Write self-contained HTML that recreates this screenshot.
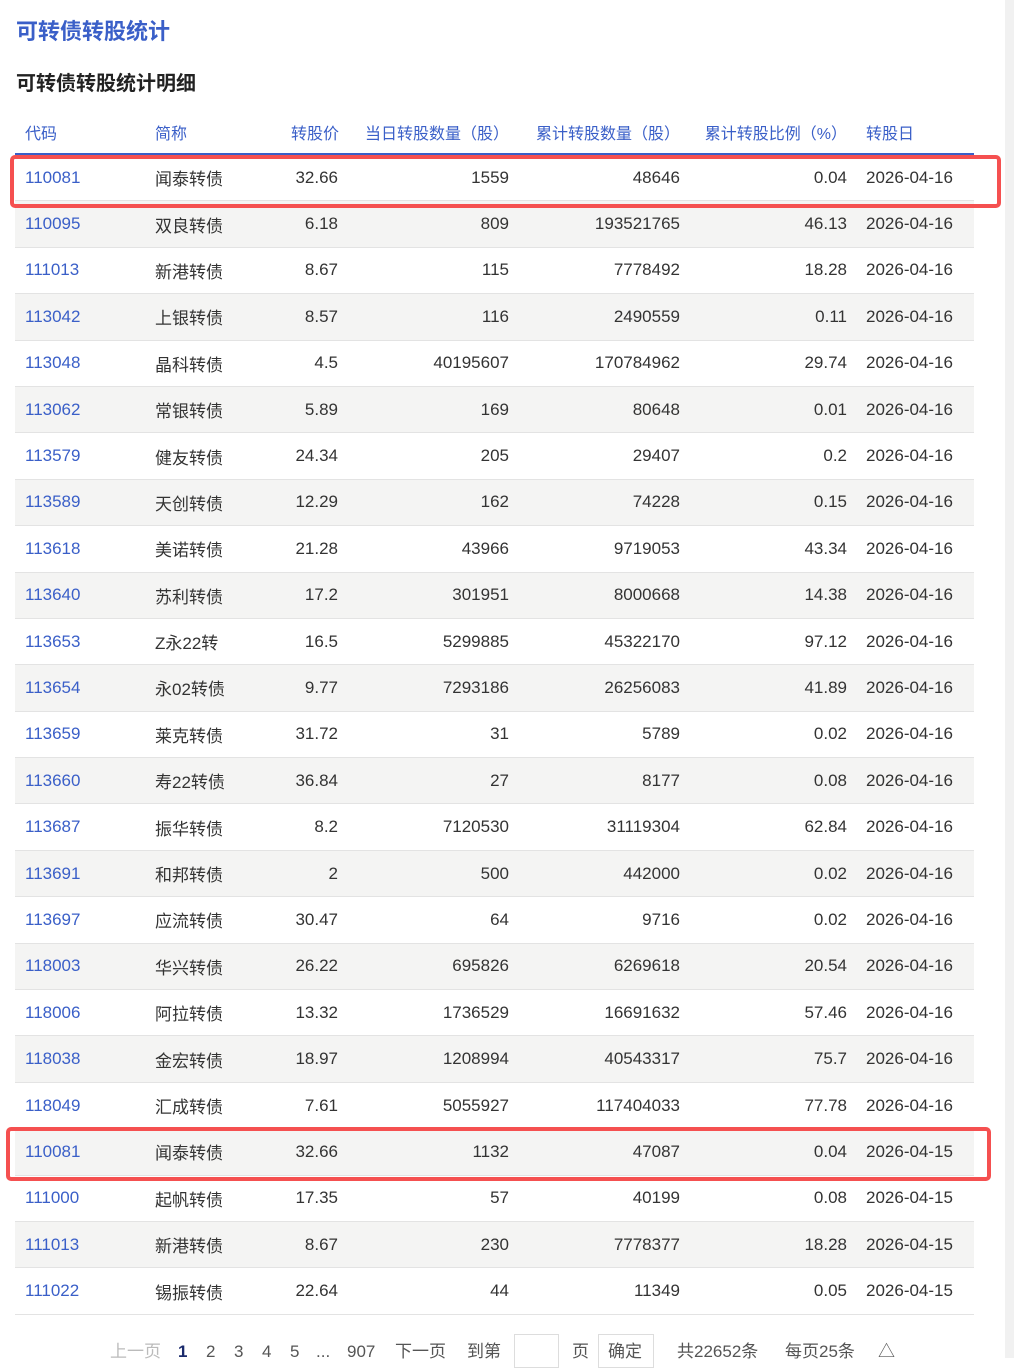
<!DOCTYPE html>
<html><head><meta charset="utf-8"><style>
body{margin:0;background:#fff;font-family:"Liberation Sans","Noto Sans CJK SC",sans-serif;width:1014px;height:1358px;overflow:hidden;position:relative}
.sb{position:absolute;right:0;top:0;width:9px;height:1358px;background:#f1f1f1}
h1{position:absolute;left:16px;top:14px;margin:0;font-size:22px;color:#3a5fc8;font-weight:bold}
h2{position:absolute;left:16px;top:67px;margin:0;font-size:20px;color:#222;font-weight:bold}
table{position:absolute;left:15px;top:110px;border-collapse:collapse;table-layout:fixed;width:959px;font-size:17px;color:#333}
th{font-weight:normal;color:#3a5fc8;font-size:16px;height:41px;border-bottom:2px solid #3a5fc8;white-space:nowrap}
td{height:45.4px;border-bottom:1px solid #e3e3e3;white-space:nowrap;padding:0}
tbody tr:nth-child(odd) td{background:#fff}
tbody tr:nth-child(even) td{background:#f4f4f3}
.c{padding-left:10px;text-align:left;color:#3a5fc8}
.n{padding-left:10px;text-align:left}
.r{text-align:right;padding-right:10px}
.d{padding-left:9px;text-align:left}
th.c,th.n{padding-left:10px;text-align:left}
th.r{text-align:right;padding-right:10px}
th.d{text-align:left;padding-left:9px}
.box{position:absolute;border:4px solid #f55050;border-radius:5px;box-sizing:border-box}
.p{position:absolute;top:1341px;font-size:17px;line-height:22px;color:#555;white-space:nowrap}
.in{position:absolute;top:1334px;border:1px solid #ddd;box-sizing:border-box;height:34px}
</style></head><body>
<div class="sb"></div>
<h1>可转债转股统计</h1>
<h2>可转债转股统计明细</h2>
<table>
<colgroup><col style="width:130px"><col style="width:145px"><col style="width:58px"><col style="width:171px"><col style="width:171px"><col style="width:167px"><col style="width:117px"></colgroup>
<thead><tr><th class="c">代码</th><th class="n">简称</th><th class="r">转股价</th><th class="r">当日转股数量（股）</th><th class="r">累计转股数量（股）</th><th class="r">累计转股比例（%）</th><th class="d">转股日</th></tr></thead>
<tbody>
<tr><td class="c">110081</td><td class="n">闻泰转债</td><td class="r">32.66</td><td class="r">1559</td><td class="r">48646</td><td class="r">0.04</td><td class="d">2026-04-16</td></tr>
<tr><td class="c">110095</td><td class="n">双良转债</td><td class="r">6.18</td><td class="r">809</td><td class="r">193521765</td><td class="r">46.13</td><td class="d">2026-04-16</td></tr>
<tr><td class="c">111013</td><td class="n">新港转债</td><td class="r">8.67</td><td class="r">115</td><td class="r">7778492</td><td class="r">18.28</td><td class="d">2026-04-16</td></tr>
<tr><td class="c">113042</td><td class="n">上银转债</td><td class="r">8.57</td><td class="r">116</td><td class="r">2490559</td><td class="r">0.11</td><td class="d">2026-04-16</td></tr>
<tr><td class="c">113048</td><td class="n">晶科转债</td><td class="r">4.5</td><td class="r">40195607</td><td class="r">170784962</td><td class="r">29.74</td><td class="d">2026-04-16</td></tr>
<tr><td class="c">113062</td><td class="n">常银转债</td><td class="r">5.89</td><td class="r">169</td><td class="r">80648</td><td class="r">0.01</td><td class="d">2026-04-16</td></tr>
<tr><td class="c">113579</td><td class="n">健友转债</td><td class="r">24.34</td><td class="r">205</td><td class="r">29407</td><td class="r">0.2</td><td class="d">2026-04-16</td></tr>
<tr><td class="c">113589</td><td class="n">天创转债</td><td class="r">12.29</td><td class="r">162</td><td class="r">74228</td><td class="r">0.15</td><td class="d">2026-04-16</td></tr>
<tr><td class="c">113618</td><td class="n">美诺转债</td><td class="r">21.28</td><td class="r">43966</td><td class="r">9719053</td><td class="r">43.34</td><td class="d">2026-04-16</td></tr>
<tr><td class="c">113640</td><td class="n">苏利转债</td><td class="r">17.2</td><td class="r">301951</td><td class="r">8000668</td><td class="r">14.38</td><td class="d">2026-04-16</td></tr>
<tr><td class="c">113653</td><td class="n">Z永22转</td><td class="r">16.5</td><td class="r">5299885</td><td class="r">45322170</td><td class="r">97.12</td><td class="d">2026-04-16</td></tr>
<tr><td class="c">113654</td><td class="n">永02转债</td><td class="r">9.77</td><td class="r">7293186</td><td class="r">26256083</td><td class="r">41.89</td><td class="d">2026-04-16</td></tr>
<tr><td class="c">113659</td><td class="n">莱克转债</td><td class="r">31.72</td><td class="r">31</td><td class="r">5789</td><td class="r">0.02</td><td class="d">2026-04-16</td></tr>
<tr><td class="c">113660</td><td class="n">寿22转债</td><td class="r">36.84</td><td class="r">27</td><td class="r">8177</td><td class="r">0.08</td><td class="d">2026-04-16</td></tr>
<tr><td class="c">113687</td><td class="n">振华转债</td><td class="r">8.2</td><td class="r">7120530</td><td class="r">31119304</td><td class="r">62.84</td><td class="d">2026-04-16</td></tr>
<tr><td class="c">113691</td><td class="n">和邦转债</td><td class="r">2</td><td class="r">500</td><td class="r">442000</td><td class="r">0.02</td><td class="d">2026-04-16</td></tr>
<tr><td class="c">113697</td><td class="n">应流转债</td><td class="r">30.47</td><td class="r">64</td><td class="r">9716</td><td class="r">0.02</td><td class="d">2026-04-16</td></tr>
<tr><td class="c">118003</td><td class="n">华兴转债</td><td class="r">26.22</td><td class="r">695826</td><td class="r">6269618</td><td class="r">20.54</td><td class="d">2026-04-16</td></tr>
<tr><td class="c">118006</td><td class="n">阿拉转债</td><td class="r">13.32</td><td class="r">1736529</td><td class="r">16691632</td><td class="r">57.46</td><td class="d">2026-04-16</td></tr>
<tr><td class="c">118038</td><td class="n">金宏转债</td><td class="r">18.97</td><td class="r">1208994</td><td class="r">40543317</td><td class="r">75.7</td><td class="d">2026-04-16</td></tr>
<tr><td class="c">118049</td><td class="n">汇成转债</td><td class="r">7.61</td><td class="r">5055927</td><td class="r">117404033</td><td class="r">77.78</td><td class="d">2026-04-16</td></tr>
<tr><td class="c">110081</td><td class="n">闻泰转债</td><td class="r">32.66</td><td class="r">1132</td><td class="r">47087</td><td class="r">0.04</td><td class="d">2026-04-15</td></tr>
<tr><td class="c">111000</td><td class="n">起帆转债</td><td class="r">17.35</td><td class="r">57</td><td class="r">40199</td><td class="r">0.08</td><td class="d">2026-04-15</td></tr>
<tr><td class="c">111013</td><td class="n">新港转债</td><td class="r">8.67</td><td class="r">230</td><td class="r">7778377</td><td class="r">18.28</td><td class="d">2026-04-15</td></tr>
<tr><td class="c">111022</td><td class="n">锡振转债</td><td class="r">22.64</td><td class="r">44</td><td class="r">11349</td><td class="r">0.05</td><td class="d">2026-04-15</td></tr>
</tbody></table>
<div class="box" style="left:10px;top:155px;width:991px;height:53px"></div>
<div class="box" style="left:6px;top:1127px;width:985px;height:54px"></div>
<span class="p" style="left:110px;color:#bbb">上一页</span>
<span class="p" style="left:178px;color:#1a2a6c;font-weight:bold">1</span>
<span class="p" style="left:206px">2</span>
<span class="p" style="left:234px">3</span>
<span class="p" style="left:262px">4</span>
<span class="p" style="left:290px">5</span>
<span class="p" style="left:316px">...</span>
<span class="p" style="left:347px">907</span>
<span class="p" style="left:395px">下一页</span>
<span class="p" style="left:467px">到第</span>
<div class="in" style="left:514px;width:45px"></div>
<span class="p" style="left:572px">页</span>
<div class="in" style="left:598px;width:56px"></div>
<span class="p" style="left:608px">确定</span>
<span class="p" style="left:677px">共22652条</span>
<span class="p" style="left:785px">每页25条</span>
<span class="p" style="left:878px">△</span>
</body></html>
